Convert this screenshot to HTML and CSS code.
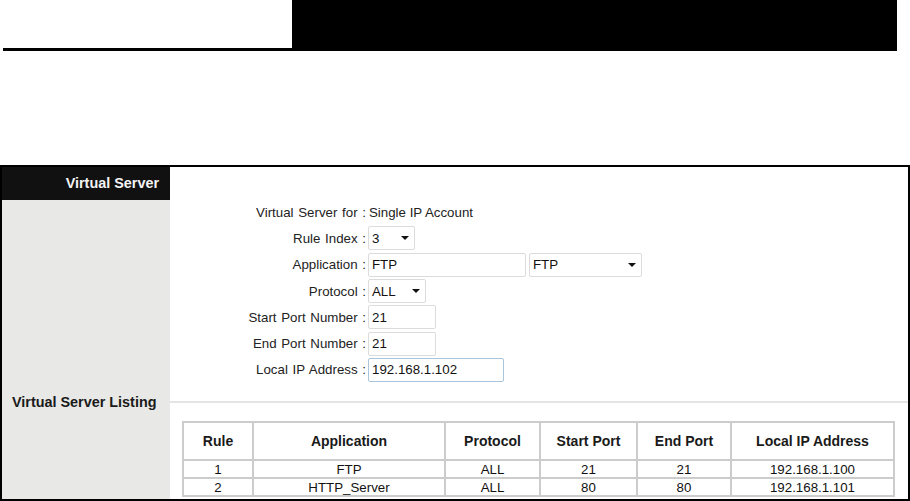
FILE: index.html
```html
<!DOCTYPE html>
<html>
  <head>
    <meta charset="utf-8" />
    <title>Virtual Server</title>
    <link rel="stylesheet" href="styles.css">
  </head>
  <body>
    <div class="masthead">
      <div class="brand"></div>
      <div class="banner"></div>
    </div>

    <div class="frame">
      <div class="side">
        <div class="sideTitle">Virtual Server</div>
      </div>
      <div class="main">
        <div class="form">
          <span class="label">Virtual Server for :</span>
          <span class="text">Single IP Account</span>

          <span class="label">Rule Index :</span>
          <span class="value">
            <span class="select w47">3<i class="arrow"></i></span>
          </span>

          <span class="label">Application :</span>
          <span class="value">
            <span class="input w158">FTP</span>
            <span class="select w113">FTP<i class="arrow"></i></span>
          </span>

          <span class="label">Protocol :</span>
          <span class="value">
            <span class="select w58">ALL<i class="arrow"></i></span>
          </span>

          <span class="label">Start Port Number :</span>
          <span class="value"><span class="input w68">21</span></span>

          <span class="label">End Port Number :</span>
          <span class="value"><span class="input w68">21</span></span>

          <span class="label">Local IP Address :</span>
          <span class="value">
            <span class="input w136 focused">192.168.1.102</span>
          </span>
        </div>
      </div>

      <div class="side sideLabel">Virtual Server Listing</div>
      <div class="main divider"></div>

      <div class="side"></div>
      <div class="main listing">
        <table>
          <tr>
            <th class="cRule">Rule</th>
            <th class="cApp">Application</th>
            <th class="cProto">Protocol</th>
            <th class="cStart">Start Port</th>
            <th class="cEnd">End Port</th>
            <th class="cIp">Local IP Address</th>
          </tr>
          <tr>
            <td>1</td>
            <td>FTP</td>
            <td>ALL</td>
            <td>21</td>
            <td>21</td>
            <td>192.168.1.100</td>
          </tr>
          <tr>
            <td>2</td>
            <td>HTTP_Server</td>
            <td>ALL</td>
            <td>80</td>
            <td>80</td>
            <td>192.168.1.101</td>
          </tr>
        </table>
      </div>
    </div>
  </body>
</html>
```

FILE: styles.css
```css
html {
  font-family: "Liberation Sans", Arial, sans-serif;
}

body {
  margin: 0;
  background-color: #fff;
  color: #222;
  font-size: 13.3px;
  overflow: hidden;
}

.masthead {
  display: flex;
  height: 51px;
}

.brand {
  width: 289px;
  margin-left: 3px;
  border-bottom: 3px solid #000;
  box-sizing: border-box;
}

.banner {
  width: 605px;
  background-color: #000;
}

.frame {
  margin-top: 114px;
  width: 910px;
  height: 336px;
  border: 2px solid #000;
  box-sizing: border-box;
  display: grid;
  grid-template-columns: 168px 1fr;
  grid-template-rows: 227px 16px auto;
  overflow: hidden;
}

.side {
  background-color: #e8e8e6;
}

.sideTitle {
  height: 33px;
  line-height: 33px;
  background-color: #111;
  color: #f4f4f4;
  font-weight: bold;
  font-size: 14.4px;
  text-align: right;
  padding-right: 11px;
}

.sideLabel {
  font-weight: bold;
  font-size: 14.4px;
  line-height: 16px;
  padding-left: 10px;
  color: #1a1a1a;
}

.form {
  padding-top: 32px;
  display: grid;
  grid-template-columns: 196px auto;
  grid-auto-rows: 26.3px;
  column-gap: 2px;
  align-items: center;
}

.label {
  text-align: right;
  word-spacing: 1px;
}

.text {
  padding-left: 1px;
}

.value {
  display: flex;
  gap: 3px;
}

.input,
.select {
  display: flex;
  align-items: center;
  height: 24px;
  box-sizing: border-box;
  border: 1px solid #dcdcdc;
  border-radius: 2px;
  padding: 0 3px;
  background-color: #fff;
  color: #111;
}

.focused {
  border-color: #a9c4dd;
}

.select {
  justify-content: space-between;
  padding-right: 5px;
}

.arrow {
  width: 0;
  height: 0;
  border-left: 4px solid transparent;
  border-right: 4px solid transparent;
  border-top: 4px solid #111;
}

.w47 { width: 47px; }
.w58 { width: 58px; }
.w68 { width: 68px; }
.w113 { width: 113px; }
.w136 { width: 136px; }
.w158 { width: 158px; }

.divider {
  background-image: linear-gradient(
    transparent 7px,
    #e4e4e4 7px,
    #e4e4e4 9px,
    transparent 9px
  );
}

.listing {
  padding: 11px 0 0 12px;
}

table {
  border-collapse: collapse;
  table-layout: fixed;
  border: 2px solid #cccccc;
}

th,
td {
  border: 2px solid #cccccc;
  padding: 0;
  text-align: center;
}

th {
  height: 36px;
  font-size: 14px;
  font-weight: bold;
  color: #1a1a1a;
}

td {
  height: 16px;
  line-height: 15px;
  color: #111;
}

.cRule { width: 68px; }
.cApp { width: 190px; }
.cProto { width: 93px; }
.cStart { width: 95px; }
.cEnd { width: 92px; }
.cIp { width: 161px; }
```
